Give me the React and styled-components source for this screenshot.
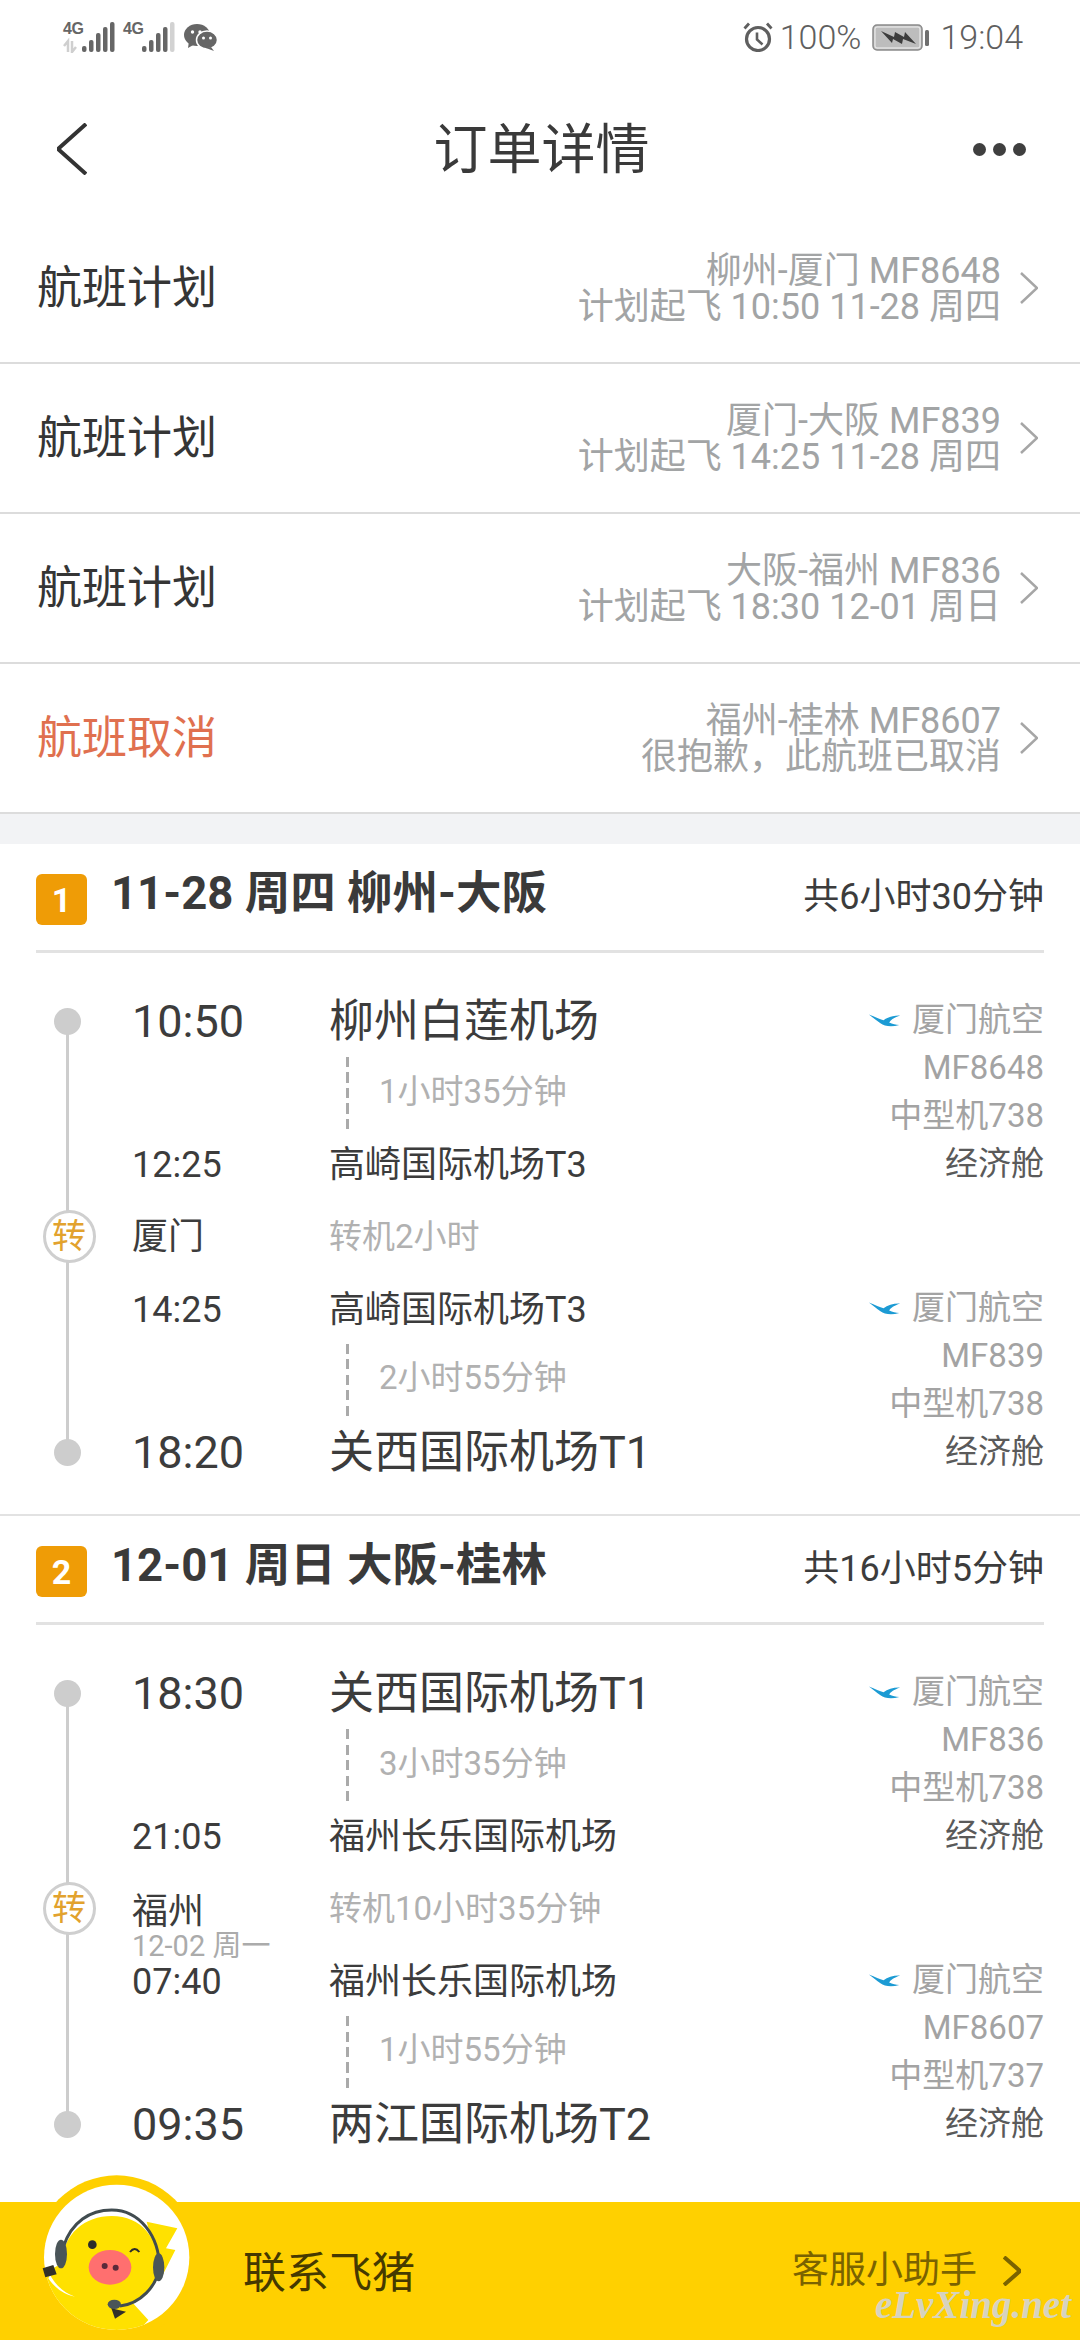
import styled, { createGlobalStyle } from 'styled-components';

const FONT = `Roboto, "Noto Sans CJK SC", sans-serif`;

const GlobalStyle = createGlobalStyle`
    html, body {
        margin: 0;
        padding: 0;
        background: #fff;
    }
    body {
        font-family: ${FONT};
    }
`

const Page = styled.div`
    position: relative;
    width: 1080px;
    height: 2340px;
    overflow: hidden;
    background: #fff;
    color: #3c3c3c;
`

const StatusBar = styled.div`
    height: 74px;
    display: flex;
    align-items: center;
    justify-content: space-between;
    padding: 0 57px 0 63px;
`

const StatusGroup = styled.div`
    display: flex;
    align-items: center;
`

const Sim = styled.div`
    position: relative;
    width: 60px;
    height: 32px;
    margin-right: ${(p) => p.$gap}px;
`

const NetLabel = styled.span`
    position: absolute;
    left: 0;
    top: -1px;
    font: 700 16px/18px "Liberation Sans", sans-serif;
    letter-spacing: -0.5px;
    color: #666;
`

const StatusText = styled.span`
    font-size: 34px;
    font-weight: 300;
    line-height: 40px;
    color: #5f5f5f;
    margin-left: ${(p) => p.$left || 0}px;
`

const BatterySlot = styled.span`
    display: flex;
    margin: 2px 0 0 11px;
`

const NavBar = styled.div`
    height: 140px;
    padding: 10px 54px 0 57px;
    box-sizing: border-box;
    display: grid;
    grid-template-columns: 1fr auto 1fr;
    align-items: center;
`

const NavTitle = styled.div`
    font-size: 54px;
    color: #3a3a3a;
    line-height: 70px;
    margin-top: 3px;
`

const MoreDots = styled.div`
    display: flex;
    gap: 7px;
    justify-self: end;
`

const Dot = styled.span`
    width: 13px;
    height: 13px;
    border-radius: 50%;
    background: #3f3f3f;
`

const PlanRow = styled.div`
    height: 150px;
    box-sizing: border-box;
    border-bottom: 2px solid #dcdcdc;
    padding: 0 42px 0 37px;
    display: flex;
    align-items: center;
    justify-content: space-between;
`

const PlanLabel = styled.div`
    font-size: 45px;
    line-height: 60px;
    margin-top: 2px;
    color: ${(p) => (p.$cancelled ? '#e0704f' : '#353535')};
`

const PlanSide = styled.div`
    display: flex;
    align-items: center;
    gap: 19px;
`

const PlanInfo = styled.div`
    text-align: right;
    font-size: 36px;
    line-height: 36px;
    margin-top: 2px;
    color: #a2a4a5;
`

const Band = styled.div`
    height: 30px;
    background: #f2f3f5;
`

const Section = styled.section`
    height: 672px;
    box-sizing: border-box;
    padding: 0 36px;
    border-bottom: ${(p) => (p.$last ? 'none' : '2px solid #e2e2e2')};
`

const Header = styled.div`
    height: 109px;
    box-sizing: border-box;
    border-bottom: 3px solid #e2e2e2;
    display: flex;
    align-items: center;
    justify-content: space-between;
`

const HeaderLeft = styled.div`
    display: flex;
    align-items: center;
    gap: 24px;
`

const Badge = styled.span`
    width: 51px;
    height: 51px;
    border-radius: 6px;
    background: #ef9c06;
    color: #fff;
    font-size: 34px;
    font-weight: 700;
    display: flex;
    align-items: center;
    justify-content: center;
    margin-top: 5px;
`

const HeaderTitle = styled.div`
    font-size: 45.5px;
    font-weight: 700;
    line-height: 60px;
    color: #3a3a3a;
    margin-top: -6px;
`

const HeaderTotal = styled.div`
    font-size: 36px;
    line-height: 50px;
    color: #3c3c3c;
`

const Timeline = styled.div`
    position: relative;
    margin-top: 32px;

    &::before {
        content: '';
        position: absolute;
        left: 30px;
        top: 37px;
        height: 430px;
        width: 3px;
        background: #cdcdcd;
    }
`

const Leg = styled.div`
    display: flex;
    justify-content: space-between;
`

const LegRows = styled.div`
    flex: 1;
`

const Row = styled.div`
    position: relative;
    height: ${(p) => p.$h}px;
    box-sizing: border-box;
    padding-top: ${(p) => p.$pad || 0}px;
    display: flex;
    align-items: center;
`

const Rail = styled.div`
    width: 63px;
    margin-right: 33px;
    display: flex;
    justify-content: center;
`

const StopDot = styled.span`
    width: 27px;
    height: 27px;
    border-radius: 50%;
    background: #cdcdcd;
`

const TransferMark = styled.span`
    width: 47px;
    height: 47px;
    margin-left: 3px;
    border: 3px solid #cfcfcf;
    border-radius: 50%;
    background: #fff;
    color: #e2a22d;
    font-size: 34px;
    line-height: 47px;
    text-align: center;
`

const TimeCell = styled.div`
    width: 197px;
    flex-shrink: 0;
    color: #3c3c3c;
    font-size: ${(p) => (p.$big ? 45 : 36)}px;
    line-height: 50px;
`

const Place = styled.div`
    font-size: ${(p) => (p.$big ? 45 : 36)}px;
    line-height: 50px;
    color: #3c3c3c;
    white-space: nowrap;
`

const Dash = styled.span`
    align-self: stretch;
    width: 3px;
    margin-left: 17px;
    background: repeating-linear-gradient(to bottom, #aaa 0 10px, transparent 10px 15.5px);
`

const Muted = styled.div`
    font-size: 33px;
    line-height: 44px;
    color: #b1b1b1;
    margin-left: ${(p) => p.$left || 0}px;
    margin-bottom: ${(p) => p.$lift || 0}px;
`

const TransferDate = styled.div`
    font-size: 29px;
    line-height: 30px;
    color: #ababab;
    margin-bottom: -30px;
    margin-top: -6px;
    white-space: nowrap;
`

const Carrier = styled.div`
    padding-top: ${(p) => p.$top}px;
    text-align: right;
    font-size: 33px;
    line-height: 48px;
    color: #a3a3a3;
`

const CarrierName = styled.div`
    display: flex;
    align-items: center;
    justify-content: flex-end;
    gap: 10px;
`

const Cabin = styled.div`
    color: #5a5a5a;
`

const ContactBar = styled.div`
    position: absolute;
    left: 0;
    right: 0;
    bottom: 0;
    height: 138px;
    background: #ffd000;
    display: flex;
    align-items: center;
    justify-content: space-between;
    padding: 0 59px 0 243px;
    box-sizing: border-box;
`

const Mascot = styled.svg`
    position: absolute;
    left: 0;
    bottom: 0;
    overflow: visible;
`

const ContactTitle = styled.div`
    font-size: 43px;
    line-height: 56px;
    color: #453900;
    margin-top: 4px;
`

const ContactHelp = styled.div`
    display: flex;
    align-items: center;
    gap: 26px;
    font-size: 37px;
    line-height: 50px;
    color: #7a6300;
`

const Watermark = styled.div`
    position: absolute;
    right: 9px;
    bottom: 12px;
    font-family: "Liberation Serif", serif;
    font-style: italic;
    font-weight: 700;
    font-size: 39px;
    line-height: 46px;
    color: rgba(212, 212, 204, 0.95);
`

const Chevron = ({ width = 18, height = 32, color = '#a6a6a6', stroke = 2.5, left = false }) => (
    <svg width={width} height={height} viewBox={`0 0 ${width} ${height}`} fill="none">
        <polyline
            points={left
                ? `${width - 1},1 1,${height / 2} ${width - 1},${height - 1}`
                : `1,1 ${width - 1},${height / 2} 1,${height - 1}`}
            stroke={color}
            strokeWidth={stroke}
        />
    </svg>
);

const SimIcon = ({ lastBarLight, arrows }) => {
    const tops = [24, 18, 11, 5, 0];
    return (
        <svg width="60" height="32" viewBox="0 0 60 32" style={{ position: 'absolute', left: 0, top: 0 }}>
            {arrows && <path d="M5 31V20L1 25M9 20V31L13 26" stroke="#cfcfcf" strokeWidth="2.5" fill="none" />}
            {tops.map((t, i) => (
                <rect
                    key={i}
                    x={19 + i * 7}
                    y={t + 1}
                    width="4.5"
                    height={30 - t}
                    rx="2"
                    fill={lastBarLight && i === 4 ? '#d2d2d2' : '#666'}
                />
            ))}
        </svg>
    );
};

const WeChatIcon = () => (
    <svg width="33" height="27" viewBox="0 0 33 27">
        <ellipse cx="13" cy="11" rx="13" ry="11" fill="#666" />
        <path d="M5 17 L4 24 L11 20 Z" fill="#666" />
        <ellipse cx="23" cy="16" rx="10.5" ry="9" fill="#666" stroke="#fff" strokeWidth="1.5" />
        <path d="M27 23 L30 27 L22 24 Z" fill="#666" />
        <circle cx="8.5" cy="8" r="1.7" fill="#fff" />
        <circle cx="16" cy="8" r="1.7" fill="#fff" />
        <circle cx="19.5" cy="14" r="1.5" fill="#fff" />
        <circle cx="26.5" cy="14" r="1.5" fill="#fff" />
    </svg>
);

const AlarmIcon = () => (
    <svg width="30" height="30" viewBox="0 0 30 30" fill="none" stroke="#5f5f5f">
        <circle cx="15" cy="17" r="11.5" strokeWidth="3.2" />
        <path d="M14 10.5V17.5L19.5 22.5" strokeWidth="2.6" />
        <path d="M1.5 6.5L6 1.5M28.5 6.5L24 1.5" strokeWidth="2.8" />
    </svg>
);

const BatteryIcon = () => (
    <svg width="58" height="28" viewBox="0 0 58 28">
        <rect x="1" y="1" width="49" height="25" rx="4" fill="#c2c2c2" stroke="#8a8a8a" strokeWidth="1.5" />
        <rect x="3" y="3" width="45" height="21" rx="2" fill="#bdbdbd" stroke="#f2f2f2" strokeWidth="1" />
        <rect x="53" y="6" width="4" height="16" rx="1.5" fill="#6f6f6f" />
        <path d="M9 7L22 13L23 8L32 13L33 8L44 20L31 15L30 20L21 15L20 19Z" fill="#3c3c3c" />
    </svg>
);

const AirlineLogo = () => (
    <svg width="35" height="15" viewBox="20 25 110 48">
        <path
            d="M25 30C45 38 60 45 72 48C85 38 105 32 125 33C105 40 95 47 90 55C100 60 112 62 122 63C100 70 75 68 62 58C50 50 38 40 25 30Z"
            fill="#1c9bd4"
        />
    </svg>
);

const MascotIcon = () => (
    <Mascot width="240" height="160" viewBox="0 0 720 480">
        <defs>
            <clipPath id="inner">
                <circle cx="350" cy="232" r="218" />
            </clipPath>
        </defs>
        <circle cx="350" cy="232" r="246" fill="#ffd000" />
        <circle cx="350" cy="232" r="218" fill="#fff" />
        <g clipPath="url(#inner)">
            <path d="M440 125L532 145L498 205L526 210L488 285L460 200Z" fill="#ffe100" />
            <path
                d="M185 250C190 160 255 108 335 108C425 108 475 175 478 262C478 320 420 360 395 365L445 420L400 470L100 470L100 300Z"
                fill="#ffe100"
            />
            <path d="M150 285C170 320 195 340 225 350C195 345 165 325 145 295Z" fill="#fff" />
        </g>
        <path d="M190 200C215 125 270 90 335 90C420 90 478 170 478 262C470 320 420 372 360 378" fill="none" stroke="#414c50" strokeWidth="9" />
        <ellipse cx="183" cy="222" rx="18" ry="43" fill="#4a5558" />
        <ellipse cx="476" cy="262" rx="17" ry="42" fill="#4a5558" />
        <ellipse cx="343" cy="373" rx="20" ry="14" fill="#4a5558" />
        <path d="M128 265L160 255L170 283L136 292Z" fill="#33302a" />
        <path d="M334 385L378 395L345 416Z" fill="#33302a" />
        <circle cx="277" cy="194" r="13" fill="#2b2b2b" />
        <path d="M390 216Q404 198 418 216" fill="none" stroke="#2b2b2b" strokeWidth="6" />
        <ellipse cx="330" cy="262" rx="64" ry="52" fill="#ff6f6f" />
        <circle cx="314" cy="258" r="9" fill="#5a2a3a" />
        <circle cx="347" cy="263" r="9" fill="#5a2a3a" />
    </Mascot>
);

const plans = [
    { label: '航班计划', route: '柳州-厦门 MF8648', detail: '计划起飞 10:50 11-28 周四' },
    { label: '航班计划', route: '厦门-大阪 MF839', detail: '计划起飞 14:25 11-28 周四' },
    { label: '航班计划', route: '大阪-福州 MF836', detail: '计划起飞 18:30 12-01 周日' },
    { label: '航班取消', route: '福州-桂林 MF8607', detail: '很抱歉，此航班已取消', cancelled: true },
];

const trips = [
    {
        no: 1,
        title: '11-28 周四 柳州-大阪',
        total: '共6小时30分钟',
        first: {
            dep: ['10:50', '柳州白莲机场'],
            span: '1小时35分钟',
            arr: ['12:25', '高崎国际机场T3'],
            flight: 'MF8648',
            plane: '中型机738',
        },
        city: '厦门',
        wait: '转机2小时',
        second: {
            dep: ['14:25', '高崎国际机场T3'],
            span: '2小时55分钟',
            arr: ['18:20', '关西国际机场T1'],
            flight: 'MF839',
            plane: '中型机738',
        },
    },
    {
        no: 2,
        title: '12-01 周日 大阪-桂林',
        total: '共16小时5分钟',
        first: {
            dep: ['18:30', '关西国际机场T1'],
            span: '3小时35分钟',
            arr: ['21:05', '福州长乐国际机场'],
            flight: 'MF836',
            plane: '中型机738',
        },
        city: '福州',
        date: '12-02 周一',
        wait: '转机10小时35分钟',
        second: {
            dep: ['07:40', '福州长乐国际机场'],
            span: '1小时55分钟',
            arr: ['09:35', '两江国际机场T2'],
            flight: 'MF8607',
            plane: '中型机737',
        },
    },
];

const Stop = ({ h, big, dot, time, place }) => (
    <Row $h={h} $pad={big ? 1 : 4}>
        <Rail>{dot && <StopDot />}</Rail>
        <TimeCell $big={big}>{time}</TimeCell>
        <Place $big={big}>{place}</Place>
    </Row>
);

const FlightLeg = ({ leg, heights, top, startDot, endDot }) => (
    <Leg>
        <LegRows>
            <Stop h={heights[0]} big={startDot} dot={startDot} time={leg.dep[0]} place={leg.dep[1]} />
            <Row $h={heights[1]}>
                <Rail />
                <TimeCell />
                <Dash />
                <Muted $left={30} $lift={4}>{leg.span}</Muted>
            </Row>
            <Stop h={heights[2]} big={endDot} dot={endDot} time={leg.arr[0]} place={leg.arr[1]} />
        </LegRows>
        <Carrier $top={top}>
            <CarrierName>
                <AirlineLogo />
                厦门航空
            </CarrierName>
            <div>{leg.flight}</div>
            <div>{leg.plane}</div>
            <Cabin>经济舱</Cabin>
        </Carrier>
    </Leg>
);

const Trip = ({ trip, last }) => (
    <Section $last={last}>
        <Header>
            <HeaderLeft>
                <Badge>{trip.no}</Badge>
                <HeaderTitle>{trip.title}</HeaderTitle>
            </HeaderLeft>
            <HeaderTotal>{trip.total}</HeaderTotal>
        </Header>
        <Timeline>
            <FlightLeg leg={trip.first} heights={[72, 73, 66]} top={11} startDot />
            <Row $h={76} $pad={5}>
                <Rail>
                    <TransferMark>转</TransferMark>
                </Rail>
                <TimeCell>
                    {trip.city}
                    {trip.date && <TransferDate>{trip.date}</TransferDate>}
                </TimeCell>
                <Muted>{trip.wait}</Muted>
            </Row>
            <FlightLeg leg={trip.second} heights={[72, 72, 72]} top={12} endDot />
        </Timeline>
    </Section>
);

const App = () => {
    return (
        <Page>
            <GlobalStyle />
            <StatusBar>
                <StatusGroup>
                    <Sim $gap={0}>
                        <NetLabel>4G</NetLabel>
                        <SimIcon arrows />
                    </Sim>
                    <Sim $gap={1}>
                        <NetLabel>4G</NetLabel>
                        <SimIcon lastBarLight />
                    </Sim>
                    <WeChatIcon />
                </StatusGroup>
                <StatusGroup>
                    <AlarmIcon />
                    <StatusText $left={7}>100%</StatusText>
                    <BatterySlot>
                        <BatteryIcon />
                    </BatterySlot>
                    <StatusText $left={10}>19:04</StatusText>
                </StatusGroup>
            </StatusBar>
            <NavBar>
                <Chevron width={30} height={52} color="#333" stroke={4} left />
                <NavTitle>订单详情</NavTitle>
                <MoreDots>
                    <Dot />
                    <Dot />
                    <Dot />
                </MoreDots>
            </NavBar>
            {plans.map((plan) => (
                <PlanRow key={plan.route}>
                    <PlanLabel $cancelled={plan.cancelled}>{plan.label}</PlanLabel>
                    <PlanSide>
                        <PlanInfo>
                            <div>{plan.route}</div>
                            <div>{plan.detail}</div>
                        </PlanInfo>
                        <Chevron />
                    </PlanSide>
                </PlanRow>
            ))}
            <Band />
            {trips.map((trip, i) => (
                <Trip key={trip.no} trip={trip} last={i === trips.length - 1} />
            ))}
            <ContactBar>
                <MascotIcon />
                <ContactTitle>联系飞猪</ContactTitle>
                <ContactHelp>
                    客服小助手
                    <Chevron width={18} height={30} color="#7a6300" stroke={4} />
                </ContactHelp>
                <Watermark>eLvXing.net</Watermark>
            </ContactBar>
        </Page>
    );
};

export default App;
